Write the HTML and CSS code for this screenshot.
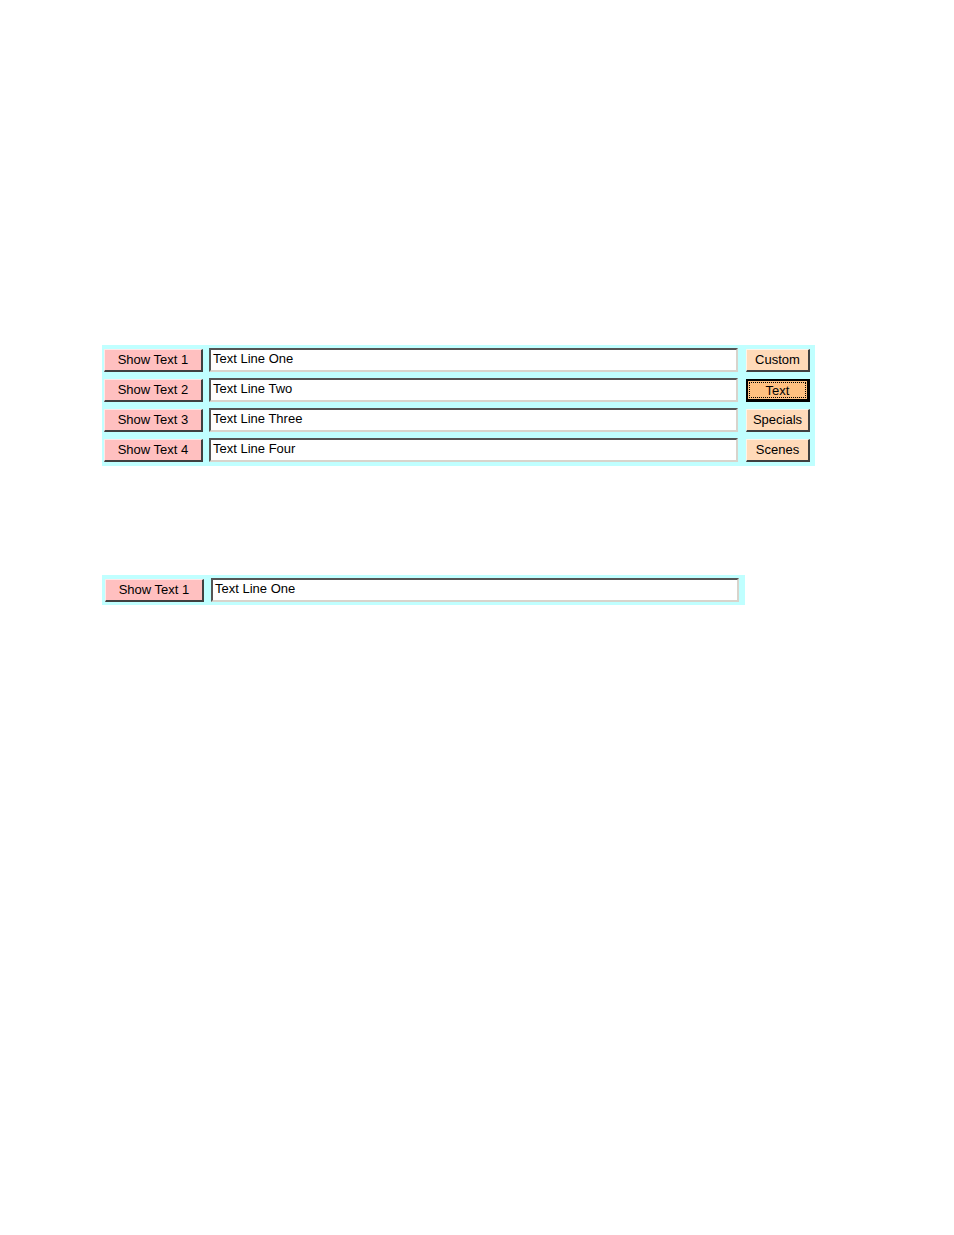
FILE: index.html
```html
<!DOCTYPE html>
<html>
<head>
<meta charset="utf-8">
<link rel="stylesheet" href="styles.css">
</head>
<body>
<div class="page">
  <div class="panel panel-main">
    <button class="btn-show">Show Text 1</button>
    <div class="field">Text Line One</div>
    <button class="btn-side">Custom</button>
    <button class="btn-show">Show Text 2</button>
    <div class="field">Text Line Two</div>
    <button class="btn-side btn-focus"><span class="focus-ring">Text</span></button>
    <button class="btn-show">Show Text 3</button>
    <div class="field">Text Line Three</div>
    <button class="btn-side">Specials</button>
    <button class="btn-show">Show Text 4</button>
    <div class="field">Text Line Four</div>
    <button class="btn-side">Scenes</button>
  </div>
  <div class="panel panel-single">
    <button class="btn-show">Show Text 1</button>
    <div class="field">Text Line One</div>
  </div>
</div>
</body>
</html>
```

FILE: styles.css
```css
html, body {
  margin: 0;
  padding: 0;
  background: #ffffff;
}
.page {
  padding: 345px 0 0 102px;
  display: flex;
  flex-direction: column;
  align-items: flex-start;
  gap: 109px;
  font-family: "Liberation Sans", Arial, sans-serif;
  font-size: 13px;
  color: #000;
}
.panel {
  background: #c0ffff;
  display: grid;
  align-items: center;
}
.panel-main {
  grid-template-columns: 99px 529px 66px;
  column-gap: 6px;
  row-gap: 6px;
  padding: 3px 5px 4px 2px;
  grid-auto-rows: 24px;
}
.panel-single {
  grid-template-columns: 99px 528px;
  column-gap: 7px;
  padding: 3px 6px 3px 3px;
  grid-auto-rows: 24px;
}
button {
  font-family: inherit;
  font-size: 13px;
  margin: 0;
  padding: 0;
  height: 23px;
  color: #000;
  cursor: default;
}
.btn-show {
  background: #ffc0c0;
  border-style: solid;
  border-width: 1px 2px 2px 1px;
  border-color: #ffe8e8 #404040 #404040 #ffe8e8;
}
.btn-side {
  background: #ffdab9;
  border-style: solid;
  border-width: 1px 2px 2px 1px;
  border-color: #fff3e8 #404040 #404040 #fff3e8;
  height: 23px;
  margin-left: 2px;
  width: 64px;
}
.btn-focus {
  background: #ffc080;
  border: 2px solid #000;
  border-right-width: 3px;
  border-bottom-width: 3px;
  display: flex;
  align-items: center;
  justify-content: center;
  padding: 1px;
}
.focus-ring {
  display: block;
  width: 100%;
  height: 100%;
  line-height: 15px;
  border: 1px dotted #000;
  box-sizing: border-box;
}
.field {
  background: #ffffff;
  height: 24px;
  box-sizing: border-box;
  border-style: solid;
  border-width: 2px;
  border-color: #555555 #d8d4cc #d8d4cc #555555;
  padding: 0 2px 0 2px;
  line-height: 17px;
  white-space: nowrap;
}
```
